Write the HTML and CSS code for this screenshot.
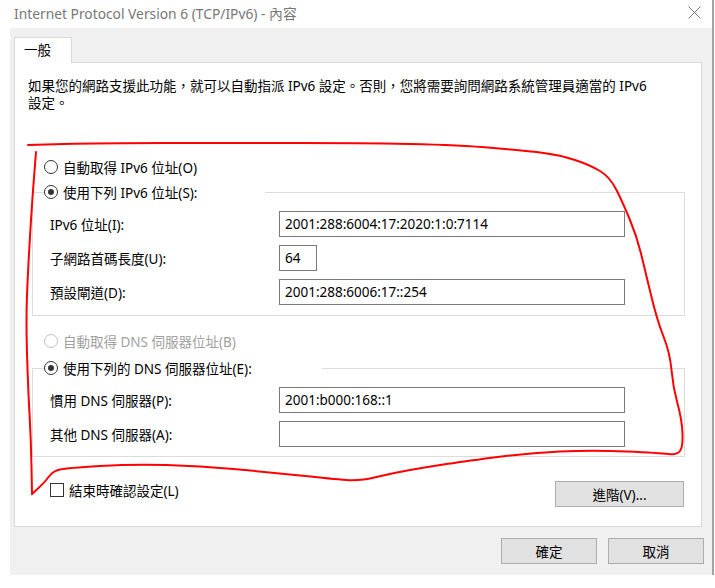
FILE: index.html
```html
<!DOCTYPE html>
<html lang="zh-TW">
<head>
<meta charset="UTF-8">
<title>Internet Protocol Version 6 (TCP/IPv6) - 內容</title>
<link rel="stylesheet" href="styles.css">
</head>
<body>
<div class="window">
    <div class="titlebar">
        <span class="title">Internet Protocol Version 6 (TCP/IPv6) - 內容</span>
        <svg class="close" width="13" height="13" viewBox="0 0 13 13"><path d="M0.5 0.5 L12.5 12.5 M12.5 0.5 L0.5 12.5" stroke="#7a7a7a" stroke-width="1"/></svg>
    </div>
    <div class="dialog">
        <div class="tabs"><div class="tab">一般</div></div>
        <div class="panel">
            <p class="desc">如果您的網路支援此功能，就可以自動指派 IPv6 設定。否則，您將需要詢問網路系統管理員適當的 IPv6<br>設定。</p>

            <div class="option first"><span class="radio"></span>自動取得 IPv6 位址(O)</div>
            <fieldset class="group">
                <legend class="ipv6-legend"><span class="option"><span class="radio checked"></span>使用下列 IPv6 位址(S):</span></legend>
                <div class="row"><span class="label">IPv6 位址(I):</span><span class="field">2001:288:6004:17:2020:1:0:7114</span></div>
                <div class="row"><span class="label">子網路首碼長度(U):</span><span class="field short">64</span></div>
                <div class="row"><span class="label">預設閘道(D):</span><span class="field">2001:288:6006:17::254</span></div>
            </fieldset>

            <div class="option disabled dns-auto"><span class="radio"></span>自動取得 DNS 伺服器位址(B)</div>
            <fieldset class="group dns">
                <legend class="dns-legend"><span class="option"><span class="radio checked"></span>使用下列的 DNS 伺服器位址(E):</span></legend>
                <div class="row"><span class="label">慣用 DNS 伺服器(P):</span><span class="field">2001:b000:168::1</span></div>
                <div class="row"><span class="label">其他 DNS 伺服器(A):</span><span class="field"></span></div>
            </fieldset>

            <div class="footer">
                <span class="check"><span class="box"></span>結束時確認設定(L)</span>
                <span class="btn advanced">進階(V)...</span>
            </div>
        </div>
        <div class="actions">
            <span class="btn">確定</span>
            <span class="btn">取消</span>
        </div>
    </div>
</div>

<!-- red marker circled by hand on the screenshot -->
<svg class="annotation" width="715" height="588" viewBox="0 0 715 588">
    <path d="M36,152 L34,177.5 Q32,203 30,236.5 Q28,270 27,295 Q26,320 27,353.5 Q28,387 29.5,413.5 Q31,440 31.5,467 L32,494"/>
    <path d="M32,494 L38.5,488 Q45,482 49,476.5 Q53,471 60,469.5 Q67,468 100,466 Q133,464 166.5,465 Q200,466 233.5,469 Q267,472 300,475.5 Q333,479 346.5,480 Q360,481 376.5,477 Q393,473 410,470 Q427,467 443.5,464.5 Q460,462 493.5,457.5 Q527,453 560,451.5 Q593,450 626.5,451.5 Q660,453 668.5,454 Q677,455 680,451 Q683,447 682.5,433.5 Q682,420 677.5,403.5 Q673,387 671.5,370 Q670,353 663.5,336.5 Q657,320 651,295 Q645,270 641,253.5 Q637,237 630,220 Q623,203 616.5,190 Q610,177 600,171 Q590,165 575,160 Q560,155 543.5,153 Q527,151 493.5,148 Q460,145 410,144 Q360,143 296.5,143 Q233,143 166.5,143 Q100,143 64,144 L28,145"/>
</svg>
</body>
</html>
```

FILE: styles.css
```css
html, body {
    margin: 0;
    background: #fff;
}
body {
    font-family: "Noto Sans", "Noto Sans CJK TC", sans-serif;
    font-size: 13.5px;
    color: #000;
    width: 715px;
    height: 588px;
    position: relative;
    overflow: hidden;
}

.window {
    width: 712px;
    border-right: 2px solid #a3a3a3;
}
.titlebar {
    height: 28px;
    box-sizing: border-box;
    display: flex;
    align-items: center;
    justify-content: space-between;
    padding: 0 11px 3px 14px;
}
.titlebar .title {
    color: #777;
    font-size: 13.8px;
}

.dialog {
    margin-left: 10px;
    height: 547px;
    background: #f0f0f0;
    padding: 9px 0 0 4px;
    box-sizing: border-box;
}
.tab {
    width: 58px;
    height: 26px;
    box-sizing: border-box;
    border: 1px solid #d9d9d9;
    border-bottom: none;
    background: #fff;
    padding-left: 9px;
    line-height: 25px;
    margin-bottom: -1px;
    position: relative;
}
.panel {
    width: 688px;
    height: 465px;
    box-sizing: border-box;
    border: 1px solid #d9d9d9;
    background: #fff;
    padding: 15px 16px 0 13px;
}
.desc {
    margin: 0;
    line-height: 17px;
    white-space: nowrap;
}

.option {
    display: flex;
    align-items: center;
    height: 20px;
    gap: 5px;
}
.option.first {
    margin: 45px 0 0 16px;
}
.option.disabled {
    color: #a0a0a0;
}
.dns-auto {
    margin: 15px 0 0 16px;
}
.radio {
    width: 14px;
    height: 14px;
    box-sizing: border-box;
    border: 1px solid #333;
    border-radius: 50%;
    background: #fff;
    display: flex;
    align-items: center;
    justify-content: center;
}
.radio.checked::after {
    content: "";
    width: 6px;
    height: 6px;
    border-radius: 50%;
    background: #333;
}
.option.disabled .radio {
    border-color: #c2c2c2;
}

.group {
    margin: 5px 0 0 4px;
    padding: 9px 0 10px 17px;
    border: 1px solid #dcdcdc;
    min-width: 0;
}
.group.dns {
    margin-top: 7px;
    padding-bottom: 9px;
}
.group legend {
    padding: 0;
    margin-left: -6px;
}
.ipv6-legend {
    width: 221px;
}
.dns-legend {
    width: 278px;
}

.row {
    display: flex;
    align-items: center;
    height: 26px;
}
.row + .row {
    margin-top: 8px;
}
.label {
    width: 229px;
}
.field {
    width: 346px;
    height: 26px;
    box-sizing: border-box;
    border: 1px solid #7a7a7a;
    padding: 0 5px;
    line-height: 24px;
}
.field.short {
    width: 38px;
}

.footer {
    display: flex;
    align-items: flex-start;
    justify-content: space-between;
    margin-top: 24px;
}
.check {
    display: flex;
    align-items: center;
    gap: 5px;
    height: 18px;
    margin-left: 22px;
}
.check .box {
    width: 14px;
    height: 14px;
    box-sizing: border-box;
    border: 1px solid #333;
}
.btn {
    display: flex;
    align-items: center;
    justify-content: center;
    width: 96px;
    height: 26px;
    box-sizing: border-box;
    background: #e1e1e1;
    border: 1px solid #adadad;
}
.btn.advanced {
    width: 129px;
    margin-right: 1px;
}
.actions {
    display: flex;
    justify-content: flex-end;
    gap: 11px;
    margin-top: 11px;
    padding-right: 8px;
}

.annotation {
    position: absolute;
    top: 0;
    left: 0;
    pointer-events: none;
}
.annotation path {
    fill: none;
    stroke: #f00;
    stroke-width: 2;
    stroke-linejoin: round;
    stroke-linecap: round;
}
```
